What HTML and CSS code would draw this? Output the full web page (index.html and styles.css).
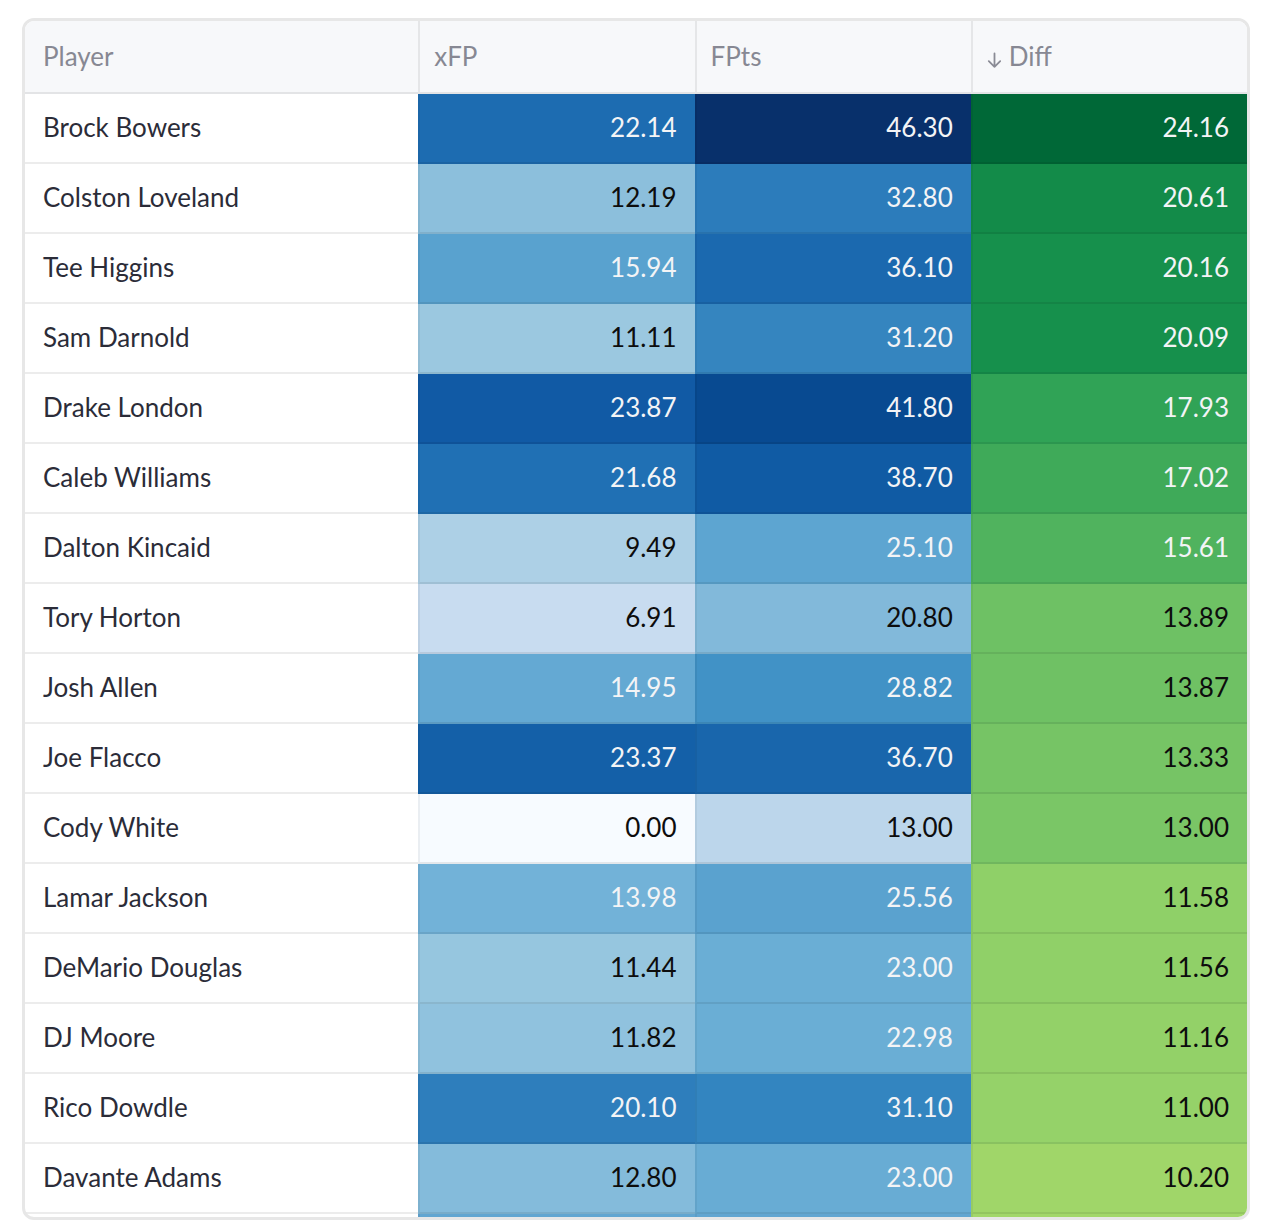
FILE: index.html
```html
<!DOCTYPE html>
<html lang="en">
<head>
<meta charset="utf-8">
<title>xFP vs FPts</title>
<link rel="stylesheet" href="styles.css">
</head>
<body>
<div class="card">
  <table class="grid">
    <colgroup>
      <col class="col-player">
      <col class="col-num">
      <col class="col-num">
      <col class="col-num">
    </colgroup>
    <thead>
      <tr>
        <th class="player">Player</th>
        <th>xFP</th>
        <th>FPts</th>
        <th><svg class="sort" width="15" height="16" viewBox="0 0 15 16" aria-hidden="true"><path d="M7.5 1.5V14.8M1.8 9.1l5.7 5.7 5.7-5.7" fill="none" stroke="currentColor" stroke-width="1.8" stroke-linecap="round" stroke-linejoin="round"/></svg>Diff</th>
      </tr>
    </thead>
    <tbody>
      <tr><td class="player">Brock Bowers</td><td class="num lt" style="background:#1d6cb1">22.14</td><td class="num lt" style="background:#08306b">46.30</td><td class="num lt" style="background:#006837">24.16</td></tr>
      <tr><td class="player">Colston Loveland</td><td class="num" style="background:#8cbfdc">12.19</td><td class="num lt" style="background:#2c7cbb">32.80</td><td class="num lt" style="background:#138b49">20.61</td></tr>
      <tr><td class="player">Tee Higgins</td><td class="num lt" style="background:#59a2cf">15.94</td><td class="num lt" style="background:#1b69af">36.10</td><td class="num lt" style="background:#16904c">20.16</td></tr>
      <tr><td class="player">Sam Darnold</td><td class="num" style="background:#9bc8e0">11.11</td><td class="num lt" style="background:#3585bf">31.20</td><td class="num lt" style="background:#16904c">20.09</td></tr>
      <tr><td class="player">Drake London</td><td class="num lt" style="background:#115aa5">23.87</td><td class="num lt" style="background:#084a91">41.80</td><td class="num lt" style="background:#30a356">17.93</td></tr>
      <tr><td class="player">Caleb Williams</td><td class="num lt" style="background:#2070b4">21.68</td><td class="num lt" style="background:#105ba4">38.70</td><td class="num lt" style="background:#3faa59">17.02</td></tr>
      <tr><td class="player">Dalton Kincaid</td><td class="num" style="background:#add0e6">9.49</td><td class="num lt" style="background:#5da5d1">25.10</td><td class="num lt" style="background:#50b35e">15.61</td></tr>
      <tr><td class="player">Tory Horton</td><td class="num" style="background:#c8dcf0">6.91</td><td class="num" style="background:#82b9da">20.80</td><td class="num" style="background:#6ec164">13.89</td></tr>
      <tr><td class="player">Josh Allen</td><td class="num lt" style="background:#64a9d3">14.95</td><td class="num lt" style="background:#4192c6">28.82</td><td class="num" style="background:#6fc164">13.87</td></tr>
      <tr><td class="player">Joe Flacco</td><td class="num lt" style="background:#1460a8">23.37</td><td class="num lt" style="background:#1966ac">36.70</td><td class="num" style="background:#76c465">13.33</td></tr>
      <tr><td class="player">Cody White</td><td class="num" style="background:#f7fbff">0.00</td><td class="num" style="background:#bcd6eb">13.00</td><td class="num" style="background:#7ac666">13.00</td></tr>
      <tr><td class="player">Lamar Jackson</td><td class="num lt" style="background:#72b2d8">13.98</td><td class="num lt" style="background:#5aa2cf">25.56</td><td class="num" style="background:#8fd068">11.58</td></tr>
      <tr><td class="player">DeMario Douglas</td><td class="num" style="background:#96c6df">11.44</td><td class="num lt" style="background:#6aaed5">23.00</td><td class="num" style="background:#90d068">11.56</td></tr>
      <tr><td class="player">DJ Moore</td><td class="num" style="background:#90c2de">11.82</td><td class="num lt" style="background:#6aaed5">22.98</td><td class="num" style="background:#93d168">11.16</td></tr>
      <tr><td class="player">Rico Dowdle</td><td class="num lt" style="background:#2e7ebc">20.10</td><td class="num lt" style="background:#3385c0">31.10</td><td class="num" style="background:#95d269">11.00</td></tr>
      <tr><td class="player">Davante Adams</td><td class="num" style="background:#84bbdb">12.80</td><td class="num lt" style="background:#68acd4">23.00</td><td class="num" style="background:#a0d669">10.20</td></tr>
      <tr class="peek"><td class="player"></td><td class="num" style="background:#62a6d1"></td><td class="num" style="background:#62a6d1"></td><td class="num" style="background:#a2d76a"></td></tr>
    </tbody>
  </table>
</div>
</body>
</html>
```

FILE: styles.css
```css
html, body {
  margin: 0;
  padding: 0;
  background: #ffffff;
}

body {
  font-family: Lato, "Liberation Sans", sans-serif;
  padding: 18px 12px 0 22px;
}

.card {
  box-sizing: border-box;
  height: 1202px;
  border: 3px solid #e7e7e7;
  border-radius: 12px;
  overflow: hidden;
  background: #ffffff;
}

.grid {
  table-layout: fixed;
  width: 1222px;
  border-collapse: separate;
  border-spacing: 0;
}

.col-player { width: 393px; }
.col-num { width: 276px; }

.grid th {
  height: 69px;
  padding: 0 14px 2px;
  background: #f7f8fa;
  color: #878893;
  font-size: 26px;
  font-weight: 400;
  text-align: left;
  vertical-align: middle;
  border-bottom: 2px solid #e3e4e6;
  border-left: 2px solid #e5e6e8;
  white-space: nowrap;
}

.grid th.player {
  padding-left: 18px;
  border-left: none;
}

.sort {
  vertical-align: -2px;
  margin-right: 7px;
  color: #8a8b95;
}

.grid td {
  height: 66px;
  padding: 0 18px 2px;
  font-size: 26px;
  vertical-align: middle;
  border-bottom: 2px solid rgba(0, 0, 0, 0.075);
  white-space: nowrap;
}

.grid td.player {
  color: #2b2c38;
}

.grid td.num {
  text-align: right;
  color: #0d0d0d;
  border-left: 2px solid rgba(0, 0, 0, 0.05);
}

.grid td.lt {
  color: #f3f4f6;
}
```
